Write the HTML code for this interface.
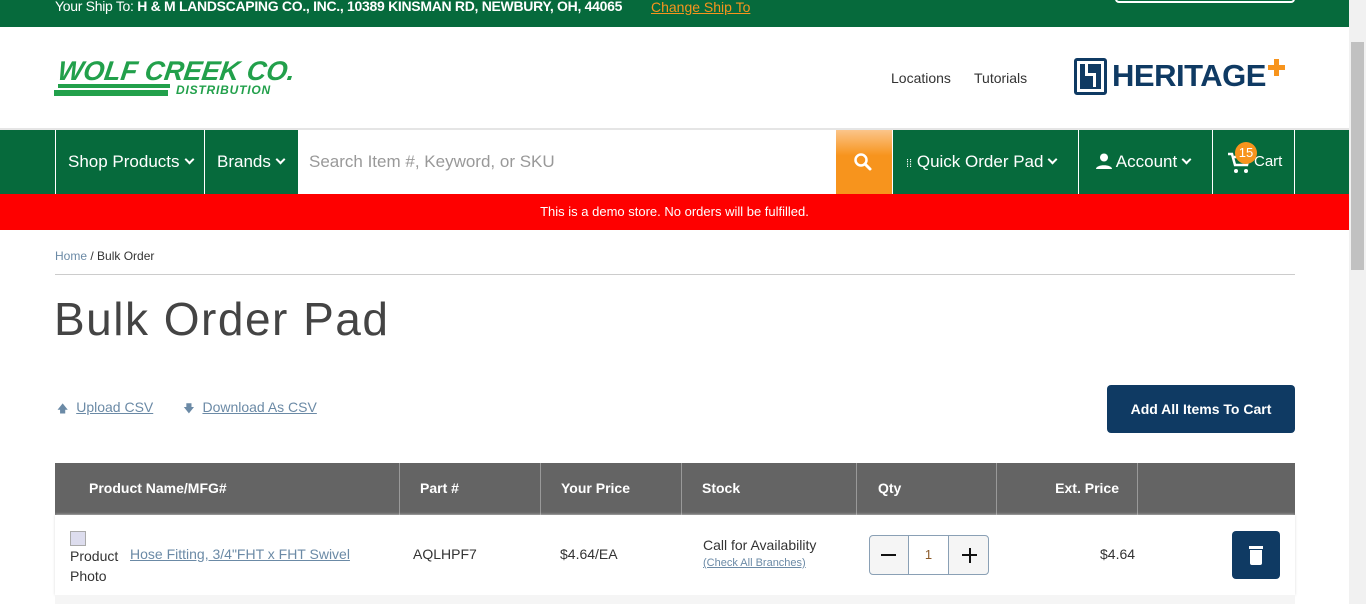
<!DOCTYPE html>
<html><head><meta charset="utf-8"><style>
*{box-sizing:border-box;margin:0;padding:0}
body{width:1366px;height:604px;overflow:hidden;font-family:"Liberation Sans",sans-serif;background:#fff;position:relative;color:#333}
.abs{position:absolute}
.top{left:0;top:0;width:1349px;height:27px;background:#066a3c;color:#fff;font-size:14px}
.nav{left:0;top:130px;width:1349px;height:64px;background:#066a3c}
.nav .it{position:absolute;top:0;height:64px;border-left:1px solid #fff;color:#fff;font-size:17px;line-height:64px}
.red{left:0;top:194px;width:1349px;height:36px;background:#fe0000;color:#fff;font-size:13px;text-align:center;line-height:35px}
.th{position:absolute;top:0;height:52px;line-height:50px;color:#fff;font-weight:bold;font-size:14px;border-left:1px solid #999}
.chev{display:inline-block;width:7px;height:7px;border-right:2px solid #fff;border-bottom:2px solid #fff;transform:rotate(45deg);margin-left:6px;position:relative;top:-4px}
</style></head><body>
<div class="abs top"><span class="abs" style="left:55px;top:-2px;letter-spacing:-.3px">Your Ship To: <b>H &amp; M LANDSCAPING CO., INC., 10389 KINSMAN RD, NEWBURY, OH, 44065</b></span><span class="abs" style="left:651px;top:-1px;color:#f7941d;text-decoration:underline">Change Ship To</span>
<div class="abs" style="left:1115px;top:-6px;width:180px;height:9px;border:2px solid #fff;border-radius:4px"></div></div>
<div class="abs" style="left:58px;top:56px;font-style:italic;font-weight:bold;font-size:27px;color:#22a04b;letter-spacing:0px;transform:skewX(-8deg)">WOLF CREEK CO.</div>
<div class="abs" style="left:58px;top:84px;width:112px;height:4px;background:#22a04b"></div>
<div class="abs" style="left:54px;top:90px;width:114px;height:6px;background:#22a04b"></div>
<div class="abs" style="left:176px;top:83px;font-style:italic;font-weight:bold;font-size:12px;color:#22a04b;letter-spacing:.8px">DISTRIBUTION</div>
<div class="abs" style="left:891px;top:70px;font-size:14px;color:#333">Locations</div>
<div class="abs" style="left:974px;top:70px;font-size:14px;color:#333">Tutorials</div>
<div class="abs" style="left:1074px;top:58px;width:33px;height:37px;border:3px solid #0f3a63;border-radius:3px"><div class="abs" style="left:3px;top:3px;width:21px;height:25px;background:#0f3a63"></div><div class="abs" style="left:8px;top:3px;width:3px;height:9px;background:#fff"></div><div class="abs" style="left:16px;top:14px;width:3px;height:12px;background:#fff"></div><div class="abs" style="left:8px;top:12px;width:11px;height:3px;background:#fff"></div></div>
<div class="abs" style="left:1112px;top:58px;font-size:31px;font-weight:bold;color:#0f3a63;letter-spacing:-.5px">HERITAGE</div>
<div class="abs" style="left:1268px;top:65px;width:17px;height:5px;background:#f7941d"></div><div class="abs" style="left:1274px;top:59px;width:5px;height:17px;background:#f7941d"></div>
<div class="abs" style="left:0;top:128px;width:1349px;height:2px;background:#e5e5e5"></div>
<div class="abs nav">
<div class="it" style="left:55px;width:150px;padding-left:12px">Shop Products<span class="chev"></span></div>
<div class="it" style="left:204px;width:94px;padding-left:12px">Brands<span class="chev"></span></div>
<div class="abs" style="left:298px;top:0;width:538px;height:64px;background:#fff;color:#999;font-size:17px;line-height:64px;padding-left:11px">Search Item #, Keyword, or SKU</div>
<div class="abs" style="left:836px;top:0;width:56px;height:64px;background:linear-gradient(#fbc58a,#f7941d 40%)"><svg class="abs" style="left:17px;top:22px" width="20" height="20" viewBox="0 0 20 20"><circle cx="8" cy="8" r="5.5" stroke="#fff" stroke-width="2.5" fill="none"/><path d="M12 12l5 5" stroke="#fff" stroke-width="3" stroke-linecap="round"/></svg></div>
<div class="it" style="left:892px;width:186px;padding-left:13px"><span style="font-size:11px">⁞⁞</span> Quick Order Pad<span class="chev"></span></div>
<div class="it" style="left:1078px;width:134px;padding-left:17px"><svg width="16" height="16" viewBox="0 0 16 16" style="vertical-align:-2px"><circle cx="8" cy="4.5" r="4" fill="#fff"/><path d="M0 16c0-5 16-5 16 0z" fill="#fff"/></svg> Account<span class="chev"></span></div>
<div class="it" style="left:1212px;width:83px;border-right:1px solid #fff;font-size:15px;padding-left:41px">Cart</div>
<svg class="abs" style="left:1227px;top:22px" width="24" height="22" viewBox="0 0 24 22"><path d="M1 2h4l3 11h12l2-8H7" stroke="#fff" stroke-width="2.5" fill="none"/><circle cx="9" cy="19" r="2" fill="#fff"/><circle cx="19" cy="19" r="2" fill="#fff"/></svg>
<div class="abs" style="left:1235px;top:12px;width:22px;height:22px;border-radius:11px;background:#f7941d;color:#fff;font-size:13px;line-height:22px;text-align:center">15</div>
</div>
<div class="abs red">This is a demo store. No orders will be fulfilled.</div>
<div class="abs" style="left:55px;top:249px;font-size:12px"><span style="color:#6b8aa6">Home</span> / <span style="color:#333">Bulk Order</span></div>
<div class="abs" style="left:55px;top:274px;width:1240px;height:1px;background:#ccc"></div>
<div class="abs" style="left:54px;top:292px;font-size:46px;color:#444;letter-spacing:1.5px">Bulk Order Pad</div>
<div class="abs" style="left:57px;top:399px;font-size:14px;color:#6b8aa6"><span style="font-size:11px">🡅</span> <u style="margin-left:4px">Upload CSV</u><span style="margin-left:30px;font-size:11px">🡇</span> <u style="margin-left:4px">Download As CSV</u></div>
<div class="abs" style="left:1107px;top:385px;width:188px;height:48px;background:#0f3a63;color:#fff;border-radius:4px;font-weight:bold;font-size:14px;text-align:center;line-height:48px">Add All Items To Cart</div>
<div class="abs" style="left:55px;top:463px;width:1240px;height:52px;background:#646464">
<div class="th" style="left:-1px;border:0;padding-left:35px">Product Name/MFG#</div>
<div class="th" style="left:344px;padding-left:20px">Part #</div>
<div class="th" style="left:485px;padding-left:20px">Your Price</div>
<div class="th" style="left:626px;padding-left:20px">Stock</div>
<div class="th" style="left:801px;padding-left:21px">Qty</div>
<div class="th" style="left:941px;width:141px;text-align:right;padding-right:18px">Ext. Price</div>
<div class="th" style="left:1082px"></div>
</div>
<div class="abs" style="left:55px;top:515px;width:1240px;height:80px;background:#fff;box-shadow:0 0 3px #ddd"></div>
<div class="abs" style="left:55px;top:595px;width:1240px;height:9px;background:#f5f5f5"></div>
<div class="abs" style="left:70px;top:531px;width:16px;height:15px;border:1px solid #aaa;background:#dde"></div>
<div class="abs" style="left:70px;top:546px;font-size:14px;line-height:20px;color:#333">Product<br>Photo</div>
<div class="abs" style="left:130px;top:546px;font-size:14px;color:#6b8aa6;text-decoration:underline">Hose Fitting, 3/4"FHT x FHT Swivel</div>
<div class="abs" style="left:413px;top:546px;font-size:14px">AQLHPF7</div>
<div class="abs" style="left:560px;top:546px;font-size:14px">$4.64/EA</div>
<div class="abs" style="left:703px;top:537px;font-size:14px">Call for Availability</div>
<div class="abs" style="left:703px;top:557px;font-size:11px;color:#6b8aa6;text-decoration:underline">(Check All Branches)</div>
<div class="abs" style="left:869px;top:535px;width:120px;height:40px;border:1px solid #8aa0b5;border-radius:4px;background:#f5f5f5;overflow:hidden">
<div class="abs" style="left:38px;top:0;width:41px;height:38px;background:#fff;border-left:1px solid #8aa0b5;border-right:1px solid #8aa0b5;text-align:center;line-height:38px;font-size:13px;color:#8a5a2a">1</div>
<div class="abs" style="left:11px;top:18px;width:15px;height:2px;background:#111"></div>
<div class="abs" style="left:92px;top:18px;width:15px;height:2px;background:#111"></div><div class="abs" style="left:98.5px;top:12px;width:2px;height:15px;background:#111"></div></div>
<div class="abs" style="left:1100px;top:546px;font-size:14px">$4.64</div>
<div class="abs" style="left:1232px;top:531px;width:48px;height:48px;background:#0f3a63;border-radius:4px"><div class="abs" style="left:17px;top:15px;width:14px;height:3px;background:#fff"></div><div class="abs" style="left:18px;top:19px;width:12px;height:15px;background:#fff;border-radius:0 0 2px 2px"></div></div>
<div class="abs" style="left:1349px;top:0;width:17px;height:604px;background:#f1f1f1"><div class="abs" style="left:2px;top:42px;width:13px;height:228px;background:#c1c1c1"></div></div>
</body></html>
